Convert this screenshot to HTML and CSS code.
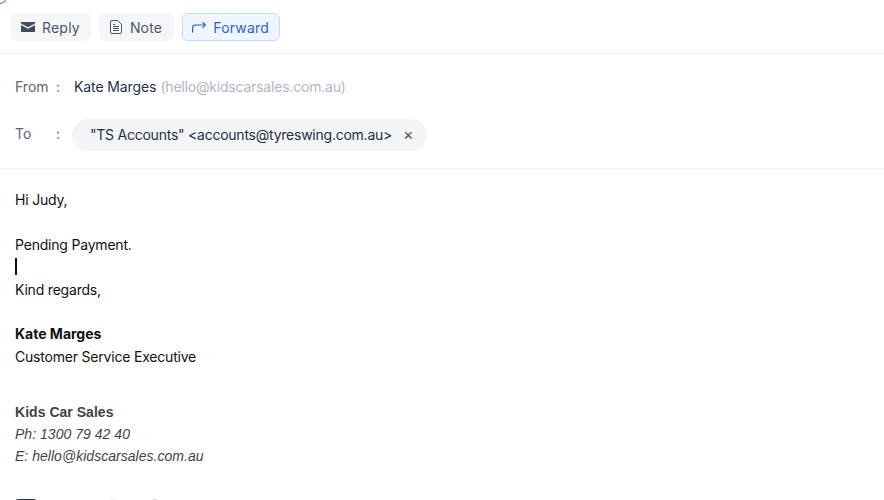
FILE: index.html
```html
<!DOCTYPE html>
<html lang="en">
<head>
<meta charset="utf-8">
<title>Compose</title>
<link rel="stylesheet" href="styles.css">
</head>
<body>
<div class="corner"></div>
<div class="toolbar">
  <button class="tab"><svg class="ico" viewBox="0 0 14 10"><path fill="#3f4d5e" d="M0 0h14v1.400L7 5.200 0 1.400zM0 3l7 3.800L14 3v7H0z"/></svg>Reply</button>
  <button class="tab tab-note"><svg class="ico note" viewBox="0 0 12 14" fill="none" stroke="#4c5766" stroke-width="1"><path d="M.5 2A1.500 1.500 0 0 1 2 .5h5.500L11.500 4.500V12a1.500 1.500 0 0 1-1.500 1.500H2A1.500 1.500 0 0 1 .5 12z"/><path d="M3 6.500h6M3 8.500h6M3 10.500h6M3 4.500h2"/></svg>Note</button>
  <button class="tab active"><svg class="ico" viewBox="0 0 14 11" fill="none" stroke="#2f5fcb" stroke-width="1.200"><path d="M.6 11V6A2.500 2.500 0 0 1 3.100 3.500H13.400M10.500.6l2.900 2.900-2.900 2.900"/></svg>Forward</button>
</div>
<div class="headers">
  <div class="row from"><span class="label">From</span><span class="colon">:</span><span class="name">Kate Marges</span><span class="addr">(hello@kidscarsales.com.au)</span></div>
  <div class="row to"><span class="label lift">To</span><span class="colon lift">:</span><span class="chip">"TS Accounts" &lt;accounts@tyreswing.com.au&gt;<span class="x">×</span></span></div>
</div>
<div class="body">
  <p>Hi Judy,</p>
  <p>&nbsp;</p>
  <p>Pending Payment.</p>
  <p><span class="caret"></span></p>
  <p>Kind regards,</p>
  <p>&nbsp;</p>
  <p class="strong">Kate Marges</p>
  <p>Customer Service Executive</p>
  <div class="sig">
    <p class="co">Kids Car Sales</p>
    <p class="it">Ph: 1300 79 42 40</p>
    <p class="it">E: hello@kidscarsales.com.au</p>
  </div>
  <div class="logos"><span class="logo"></span><span class="dot dot-a"></span><span class="dot dot-b"></span></div>
</div>
</body>
</html>
```
FILE: styles.css
```css
html, body { margin: 0; padding: 0; background: #fff; overflow: hidden; height: 500px; }
body { font-family: Inter, "Liberation Sans", sans-serif; font-size: 14px; color: #111; letter-spacing: -.2px; }
.corner { position: absolute; left: -6px; top: -6px; width: 10px; height: 8px; border: 1px solid #3b6fd8; border-radius: 50%; }
.toolbar { display: flex; gap: 8px; padding: 13px 11px 12px; height: 28px; border-bottom: 1px solid #eceef1; }
.tab { display: flex; align-items: center; gap: 7px; box-sizing: border-box; height: 28px; padding: 0 10px 0 9px; border: 1px solid transparent; border-radius: 6px; background: #f5f6f8; color: #4c5766; font: 14px Inter, sans-serif; letter-spacing: .2px; }
.tab-note { padding-right: 11px; }
.tab.active { background: #eff6ff; border-color: #bfdbfe; color: #2f5fcb; }
.ico { width: 14px; height: 14px; }
.note { width: 12px; margin: 0 1px; }
.headers { height: 114px; border-bottom: 1px solid #eceef1; padding: 0 15px; }
.row { display: flex; align-items: center; }
.from { padding-top: 22px; height: 21px; }
.to { margin-top: 22px; height: 32px; }
.label { width: 41px; color: #5d6876; letter-spacing: 0; }
.colon { width: 16px; color: #5d6876; }
.lift { padding-bottom: 3px; }
.name { color: #1e3048; margin: 0 4px 0 2px; letter-spacing: -.1px; }
.addr { color: #b0b8c2; }
.chip { display: flex; align-items: center; box-sizing: border-box; height: 32px; padding: 0 14px 2px 18px; border-radius: 16px; background: #f3f5f7; color: #1e3048; letter-spacing: -.24px; }
.x { margin-left: 11px; color: #4c5766; font-size: 16px; }
.body { padding: 20px 15px 0; line-height: 22.400px; }
.body p { margin: 0; height: 22.400px; }
.caret { display: inline-block; width: 2px; height: 17px; background: #111; vertical-align: -3px; }
.strong { font-weight: 700; letter-spacing: 0; }
.sig { padding-top: 32.480px; color: #444; font-family: "Liberation Sans", Arial, sans-serif; letter-spacing: .03px; }
.co { font-weight: 700; }
.it { font-style: italic; }
.logos { display: flex; margin-top: 31px; height: 20px; align-items: flex-start; }
.logo { width: 20px; height: 20px; margin-left: 1px; border-radius: 2px; background: #1f3a4d; }
.dot { width: 8px; height: 8px; border-radius: 50%; background: #d8d8d8; }
.dot-a { margin-left: 73px; background: #ececec; }
.dot-b { margin-left: 34px; }
```
